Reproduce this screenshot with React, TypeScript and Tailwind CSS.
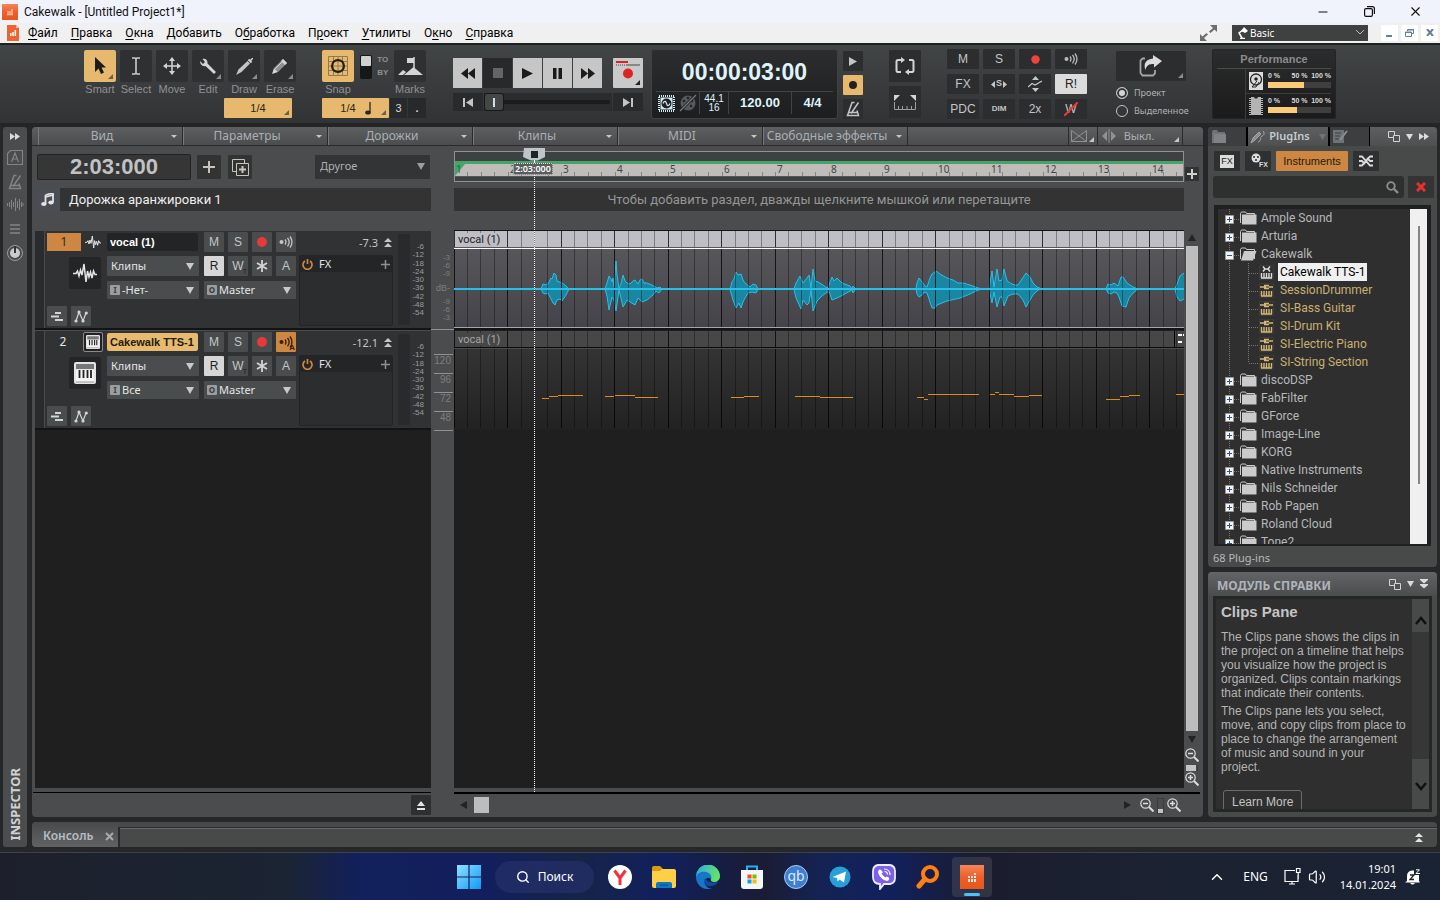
import React from "react";
import { Search, ChevronUp, Volume2, Minus, X, Copy } from "lucide-react";

const beats = Array.from({ length: 160 }, (_, i) => i);

function Corner({ color = "#8b8d8e" }: { color?: string }) {
  return (
    <svg className="absolute bottom-[3px] right-[3px]" width="5" height="5" aria-hidden="true">
      <path d="M5 0V5H0z" fill={color} />
    </svg>
  );
}

function Down({ className = "" }: { className?: string }) {
  return (
    <svg className={className} width="8" height="7" aria-hidden="true">
      <path d="M0 0H8L4 7z" fill="currentColor" />
    </svg>
  );
}

function Btn({ label, className = "", children }: { label: string; className?: string; children?: React.ReactNode }) {
  return (
    <button type="button" aria-label={label} className={"relative flex shrink-0 items-center justify-center " + className}>
      {children}
    </button>
  );
}

function Logo({ size }: { size: number }) {
  return (
    <svg width={size} height={size} viewBox="0 0 24 24" aria-hidden="true">
      <defs>
        <linearGradient id="cw" x1="0" y1="0" x2="0" y2="1">
          <stop offset="0" stopColor="#f5855c" />
          <stop offset="0.5" stopColor="#ee5f27" />
          <stop offset="1" stopColor="#e5581d" />
        </linearGradient>
      </defs>
      <path d="M0 0H24V24H0z" fill="url(#cw)" />
      <g fill="#fde6dc">
        <path d="M8 11h2v2H8zM8 14h2v3H8zM11 11h2v2h-2zM11 14h2v3h-2zM14 8h2v2h-2zM14 11h2v2h-2zM14 14h2v3h-2z" />
      </g>
    </svg>
  );
}

/* ---------- window chrome ---------- */

function TitleBar() {
  return (
    <header className="flex h-[23px] shrink-0 items-center bg-[#f0f3fb] pl-[2px] pr-[2px] text-[#111]">
      <Logo size={16} />
      <h1 className="ml-[6px] flex-1 font-['Roboto',sans-serif] text-[12px] leading-4">Cakewalk - [Untitled Project1*]</h1>
      <Btn label="Minimize" className="w-[46px]"><Minus size={14} strokeWidth={1.8} /></Btn>
      <Btn label="Restore" className="w-[46px]"><svg width="11" height="11" fill="none"><path d="M.6 4q0-1.400 1.400-1.400h5Q8.400 2.600 8.400 4v5q0 1.400-1.400 1.400H2Q.6 10.400.6 9zM3 .6h5.400q2 0 2 2V8" stroke="#111" strokeWidth="1.200" /></svg></Btn>
      <Btn label="Close" className="w-[46px]"><X size={15} strokeWidth={1.8} /></Btn>
    </header>
  );
}

const menus: [string, string, string][] = [
  ["", "Ф", "айл"], ["", "П", "равка"], ["", "О", "кна"], ["", "Д", "обавить"], ["О", "б", "работка"],
  ["П", "р", "оект"], ["", "У", "тилиты"], ["О", "к", "но"], ["", "С", "правка"],
];

function MenuBar() {
  return (
    <nav className="flex h-5 shrink-0 items-center bg-[#f0f0f0] pb-px pl-[7px] pr-[2px] text-[12px] text-black font-['Roboto',sans-serif]">
      <svg width="12" height="16" viewBox="0 0 12 16" aria-hidden="true">
        <path d="M0 0H9L12 3V16H0z" fill="#ec6430" />
        <path d="M9 0V3H12z" fill="#f9b79b" />
        <path d="M3 8h1.5v3H3zM5.300 7h1.500v4H5.300zM7.600 5h1.500v6H7.600z" fill="#fff" />
      </svg>
      <div className="ml-[9px] flex flex-1 gap-[13px] leading-4">
        {menus.map(([a, b, c]) => (
          <a key={a + b + c} href="#menu" className="whitespace-nowrap">{a}<span className="underline underline-offset-2">{b}</span>{c}</a>
        ))}
      </div>
      <svg width="17" height="16" viewBox="0 0 17 16" className="mr-[15px]" aria-hidden="true">
        <path d="M10 0h7v7l-2.500-2.500-4 3.500-1.500-1.500 4-3.500zM7 16H0V9l2.500 2.500 4-3.500L8 9.500 4 13z" fill="#6d6d6d" />
      </svg>
      <div className="relative flex h-4 w-[136px] items-center bg-[#3f4040] text-white">
        <svg width="11" height="12" viewBox="0 0 11 12" className="absolute left-[5px]" aria-hidden="true">
          <path d="M3 11.500h5M5 11 2 6 6 3" stroke="#fff" strokeWidth="1.500" fill="none" />
          <path d="M4 4 7 0l4 4-3 2z" fill="#fff" />
        </svg>
        <select aria-label="Workspace" className="h-4 w-full appearance-none bg-transparent pl-[18px] font-['Noto_Sans',sans-serif] text-[10px] leading-4 outline-none">
          <option>Basic</option>
        </select>
        <svg width="8" height="5" className="absolute right-[4px]" aria-hidden="true"><path d="M0 0l4 4 4-4" stroke="#bbb" fill="none" /></svg>
      </div>
      <div className="ml-[13px] flex gap-[3px] text-[#6a7f96]">
        <Btn label="Minimize project" className="h-4 w-[17px] bg-white"><svg width="7" height="9"><path d="M0 7h6v2H0z" fill="currentColor" /></svg></Btn>
        <Btn label="Restore project" className="h-4 w-[17px] bg-white"><svg width="9" height="8"><path d="M2.500 2V.5h6v4H7M.5 3h6v4.500h-6zM0 3.500h7M2 1h7" stroke="currentColor" fill="none" /></svg></Btn>
        <Btn label="Close project" className="h-4 w-[17px] bg-white"><svg width="8" height="7"><path d="M1 0l6 7M7 0L1 7" stroke="currentColor" strokeWidth="2" /></svg></Btn>
      </div>
    </nav>
  );
}

/* ---------- control bar ---------- */

const toolIcons: { name: string; icon: React.ReactNode; corner: boolean }[] = [
  { name: "Smart", corner: true, icon: <svg width="12" height="18"><path d="M1 0v15l3.500-3.500L7 17l3-1.500L7.500 10.500H12z" fill="#1b1b1b" /></svg> },
  { name: "Select", corner: false, icon: <svg width="8" height="18"><path d="M0 1h3l1 1 1-1h3M4 2v14M0 17h3l1-1 1 1h3" stroke="#c9cbcc" strokeWidth="1.600" fill="none" /></svg> },
  { name: "Move", corner: false, icon: <svg width="18" height="18"><path d="M9 2v14M2 9h14" stroke="#d4d5d6" strokeWidth="1.500" /><path d="M9 0l3 4H6zM9 18l3-4H6zM0 9l4-3v6zM18 9l-4-3v6z" fill="#d4d5d6" /></svg> },
  { name: "Edit", corner: true, icon: <svg width="18" height="17"><path d="M1 3 4 6 6 4 3.500 1C6 0 9 2 8.500 5.500L17 14l-2 2L6.500 8C4 9 1 6.500 1 3z" fill="#d4d5d6" /></svg> },
  { name: "Draw", corner: true, icon: <svg width="17" height="17"><path d="M0 17 2.500 11.500 11.500 3 14 5.500 5.500 14z" fill="#c4c5c6" /><path d="M12.500 1.500 15.500 4.500" stroke="#d4d5d6" strokeWidth="2" /><path d="M14 3 17 0" stroke="#d4d5d6" strokeWidth="1.500" /></svg> },
  { name: "Erase", corner: true, icon: <svg width="17" height="17"><path d="M2 10 11 1l4 4-9 9z" fill="#8e9091" /><path d="M9 3l2-2 4 4-2 2zM0 16l2-6 4 4z" fill="#d4d5d6" /><path d="M3 11l7-7" stroke="#d4d5d6" /></svg> },
];

function Tools() {
  return (
    <section className="flex flex-col" aria-label="Tools">
      <div className="flex gap-1">
        {toolIcons.map((t, i) => (
          <div key={t.name} className="flex w-8 flex-col items-center">
            <Btn label={t.name} className={i === 0 ? "h-8 w-8 rounded-[2px] bg-[#e6b96e]" : "h-8 w-8 rounded-[2px] bg-[#2e3031]"}>
              {t.icon}
              {t.corner && <Corner color={i === 0 ? "#6f5f42" : "#8b8d8e"} />}
            </Btn>
            <span className="h-4 text-[11px] leading-[15px] text-[#8f9192]">{t.name}</span>
          </div>
        ))}
      </div>
      <Btn label="Draw resolution" className="mr-1 h-5 w-[68px] self-end rounded-[1px] bg-[#e6b96e] text-[11px] text-[#2b2618]">1/4<Corner color="#6f5f42" /></Btn>
    </section>
  );
}

function Snap() {
  return (
    <section className="flex w-[104px] flex-col" aria-label="Snap">
      <div className="flex justify-between">
        <div className="flex w-8 flex-col items-center">
          <Btn label="Snap" className="h-8 w-8 rounded-[2px] bg-[#e6b96e]">
            <svg width="20" height="20" fill="none"><path d="M.5.5h19v19H.5zM5.500.5v19M10 .5v19M14.500.5v19M.5 5.500h19M.5 10h19M.5 14.500h19" stroke="#94794a" /><circle cx="10" cy="10" r="6" stroke="#221d12" strokeWidth="2" /></svg>
          </Btn>
          <span className="h-4 text-[11px] leading-[15px] text-[#8f9192]">Snap</span>
        </div>
        <button type="button" aria-label="Snap to or by" className="mt-[5px] flex h-6 w-3 flex-col self-start rounded-[2px] bg-[#161717] p-px"><span className="h-[10px] w-full rounded-[1px] bg-[#d0d0d0]" /></button>
        <div className="mt-[3px] text-[8px] font-bold leading-[13px] text-[#8f9192]"><div>TO</div><div>BY</div></div>
        <div className="flex w-8 flex-col items-center">
          <Btn label="Marks" className="h-8 w-8 rounded-[2px] bg-[#2e3031]">
            <svg width="25" height="20"><path d="M6 19 15.500 11 25 19zM0 19l5-5 3 2-3 3z" fill="#d4d5d6" /><path d="M16 12V1" stroke="#d4d5d6" strokeWidth="1.500" /><path d="M9 2h7v5H9z" fill="#d4d5d6" /></svg>
          </Btn>
          <span className="h-4 text-[11px] leading-[15px] text-[#8f9192]">Marks</span>
        </div>
      </div>
      <div className="flex gap-px text-[11px]">
        <Btn label="Snap resolution" className="h-5 w-[67px] gap-[9px] rounded-[1px] bg-[#e6b96e] text-[#2b2618]">
          <span>1/4</span>
          <svg width="6" height="13"><path d="M5 0v10" stroke="#2b2618" strokeWidth="1.300" /><ellipse cx="3" cy="10.500" rx="2.800" ry="2" fill="#2b2618" /></svg>
          <Corner color="#6f5f42" />
        </Btn>
        <Btn label="Triplet" className="h-5 w-[17px] bg-[#28292a] text-[#d8d8d8]">3</Btn>
        <Btn label="Dotted" className="h-5 flex-1 bg-[#28292a] font-bold text-[#d8d8d8]">.</Btn>
      </div>
    </section>
  );
}

function Transport() {
  const b = "h-[30px] w-[29px] bg-[#c6c6c6] text-[#1b1b1b]";
  return (
    <section className="mt-2 flex flex-col gap-[5px]" aria-label="Transport">
      <div className="flex gap-px">
        <Btn label="Rewind" className={b}><svg width="14" height="11"><path d="M7 0v11L0 5.500zM14 0v11L7 5.500z" fill="currentColor" /></svg></Btn>
        <Btn label="Stop" className="h-[30px] w-[29px] bg-[#28292b]"><svg width="10" height="10"><path d="M0 0h10v10H0z" fill="#636566" /></svg></Btn>
        <Btn label="Play" className={b}><svg width="11" height="11"><path d="M0 0l11 5.500L0 11z" fill="currentColor" /></svg></Btn>
        <Btn label="Pause" className={b}><svg width="9" height="11"><path d="M0 0h3.500v11H0zM5.500 0H9v11H5.500z" fill="currentColor" /></svg></Btn>
        <Btn label="Fast forward" className={b}><svg width="14" height="11"><path d="M0 0l7 5.500L0 11zM7 0l7 5.500L7 11z" fill="currentColor" /></svg></Btn>
        <Btn label="Record" className="ml-[10px] h-[30px] w-[30px] rounded-[1px] bg-[#c9c9c9]">
          <svg width="30" height="30"><path d="M3 4h12" stroke="#d22" strokeWidth="2" /><path d="M3 7h12" stroke="#888" strokeWidth="2" strokeDasharray="1 1" /><path d="M14 7h13" stroke="#888" strokeWidth="2" /><circle cx="15" cy="15.500" r="5" fill="#dd2424" /><path d="M27 22v5h-5z" fill="#222" /></svg>
        </Btn>
      </div>
      <div className="flex gap-px">
        <Btn label="Go to start" className="h-[18px] w-[30px] bg-[#292a2c]"><svg width="10" height="9"><path d="M0 0h2v9H0zM10 0v9L3 4.500z" fill="#c4c4c4" /></svg></Btn>
        <div className="relative flex h-[18px] flex-1 items-center bg-[#2b2c2e] px-[2px]">
          <div className="h-1 w-full rounded bg-[#1a1b1c]" />
          <div className="absolute left-px flex h-[16px] w-[18px] items-center justify-center rounded-[2px] bg-[#454747] ring-1 ring-[#171717]"><span className="h-[9px] w-[2px] bg-[#cfe0e8]" /></div>
        </div>
        <Btn label="Go to end" className="h-[18px] w-[30px] bg-[#292a2c]"><svg width="10" height="9"><path d="M8 0h2v9H8zM0 0v9l7-4.500z" fill="#c4c4c4" /></svg></Btn>
      </div>
    </section>
  );
}

function Display() {
  return (
    <section className="flex w-[185px] flex-col rounded-[2px] bg-gradient-to-b from-[#2c2d2f] to-[#1d1e1f] px-1 text-[#dff4fa] ring-1 ring-[#3f4142]" aria-label="Time">
      <output className="flex h-[42px] items-center justify-center border-b border-[#414344] pt-[3px] text-[23px] font-bold">00:00:03:00</output>
      <div className="flex h-[22px] items-stretch">
        <div className="flex w-[43px] items-center gap-1 pl-[2px]">
          <svg width="17" height="17" fill="none"><path d="M1 1h15v15H1z" stroke="#cfe8f2" strokeWidth="2" strokeDasharray="1 1" /><path d="M2.500 2.500h12v12h-12z" fill="#cfe8f2" /><circle cx="8.500" cy="8.500" r="5" fill="#1f2022" /><path d="M5 8.500c1.500-3.500 3-2 3.500 0s2 3.500 3.500 0" stroke="#cfe8f2" strokeWidth="1.200" /></svg>
          <svg width="18" height="18"><circle cx="9" cy="9" r="7.500" fill="#55595c" /><g fill="#1f2022"><circle cx="5" cy="7" r="1.200" /><circle cx="9" cy="4" r="1.200" /><circle cx="13" cy="7" r="1.200" /><circle cx="12" cy="12" r="1.200" /></g><path d="M0 18 18 0" stroke="#1f2022" strokeWidth="3" /><path d="M1 17 17 1" stroke="#77797b" strokeWidth="1.200" /></svg>
        </div>
        <div className="flex w-[29px] flex-col items-center justify-center border-l border-[#414344] text-[10px] leading-[9px]"><span>44.1</span><span>16</span></div>
        <div className="flex flex-1 items-center justify-center border-l border-[#414344] text-[13px] font-bold">120.00</div>
        <div className="flex w-[42px] items-center justify-center border-l border-[#414344] text-[13px] font-bold">4/4</div>
      </div>
    </section>
  );
}

function Echo({ color = "#b9bbbc" }: { color?: string }) {
  return <svg width="14" height="12" fill="none"><circle cx="2.500" cy="6" r="2" fill={color} /><path d="M6 3.500c1.200 1.500 1.200 3.500 0 5M8.500 1.800c2 2.500 2 6 0 8.500M11 .5c2.500 3.500 2.500 7.500 0 11" stroke={color} strokeWidth="1.300" /></svg>;
}

function Metronome({ color = "#c4c4c4" }: { color?: string }) {
  return <svg width="14" height="16" fill="none"><path d="M8.500 1.500H6L1.500 14.500h11L11 9.500M5 12.500 12.500 1.500M3 11.500h9" stroke={color} strokeWidth="1.500" /></svg>;
}

function ControlBar() {
  const mix = "h-5 w-8 rounded-[1px] bg-[#2b2d2e]";
  return (
    <div className="flex h-[84px] shrink-0 overflow-hidden border-b-4 border-t-2 border-[#242526] bg-gradient-to-b from-[#424545] to-[#313335] pl-[84px] pt-[5px] [border-top-color:#1c2321] font-['Liberation_Sans',Arial,sans-serif]">
      <Tools />
      <div className="ml-[26px] flex"><Snap /></div>
      <div className="ml-[27px] flex w-[190px]"><Transport /></div>
      <div className="ml-[9px] flex h-[68px]"><Display /></div>
      <div className="ml-[6px] mt-px flex flex-col gap-[4px]">
        <Btn label="Playhead follow" className="h-5 w-5 rounded-[1px] bg-[#2b2d2e]"><svg width="8" height="9"><path d="M0 0l8 4.500L0 9z" fill="#c4c4c4" /></svg></Btn>
        <Btn label="Record metronome" className="h-5 w-5 rounded-[1px] bg-[#e6b96e]"><svg width="8" height="8"><circle cx="4" cy="4" r="4" fill="#222" /></svg></Btn>
        <Btn label="Metronome" className="h-5 w-5 rounded-[1px] bg-[#2b2d2e]"><Metronome /></Btn>
      </div>
      <div className="ml-[26px] flex flex-col gap-1">
        <Btn label="Loop" className="h-8 w-8 rounded-[1px] bg-[#2b2d2e]"><svg width="20" height="18" fill="none"><path d="M8 3H3q-1.500 0-1.500 1.500v9Q1.500 15 3 15h3M12 15h5q1.500 0 1.500-1.500v-9Q18.500 3 17 3h-3" stroke="#d4d5d6" strokeWidth="2" /><path d="M6 0l4 3-4 3zM14 12l-4 3 4 3z" fill="#d4d5d6" /></svg></Btn>
        <Btn label="Punch" className="h-8 w-8 rounded-[1px] bg-[#2b2d2e]"><svg width="22" height="15" fill="none"><path d="M0 0h6L0 6zM22 0h-6l6 6z" fill="#d4d5d6" /><path d="M.5 7v7.500h21V7M4.500 11v3M8.500 11v3M13 11v3M17.500 11v3" stroke="#9b9d9e" /></svg></Btn>
      </div>
      <div className="-mt-px ml-[26px] grid h-[70px] grid-cols-[repeat(4,32px)] gap-x-1 gap-y-[5px] text-[12px] text-[#c4c6c7]">
        <Btn label="Mute" className={mix}>M</Btn>
        <Btn label="Solo" className={mix}>S</Btn>
        <Btn label="Arm" className={mix}><svg width="9" height="9"><circle cx="4.500" cy="4.500" r="4.200" fill="#f2423f" /></svg></Btn>
        <Btn label="Input echo" className={mix}><Echo /></Btn>
        <Btn label="FX bypass" className={mix}>FX</Btn>
        <Btn label="Exclusive solo" className={mix + " gap-px text-[9px] font-bold"}><svg width="4" height="7"><path d="M4 0v7L0 3.500z" fill="currentColor" /></svg>S<svg width="4" height="7"><path d="M0 0v7l4-3.500z" fill="currentColor" /></svg></Btn>
        <Btn label="Offset" className={mix}><svg width="15" height="16" fill="none"><path d="M7.500 0l3.500 4H4zM7.500 16l3.500-4H4z" fill="#c4c6c7" /><path d="M0 11 4 7.500l3 1.500 7-4" stroke="#c4c6c7" strokeWidth="1.300" /></svg></Btn>
        <Btn label="Read automation" className="h-5 w-8 rounded-[1px] bg-[#dcdcdc] text-[#222]">R!</Btn>
        <Btn label="Delay compensation" className={mix}>PDC</Btn>
        <Btn label="Dim" className={mix + " text-[8px] font-bold"}>DIM</Btn>
        <Btn label="Upsample" className={mix}>2x</Btn>
        <Btn label="Write automation" className={mix}>W<svg className="absolute" width="14" height="14"><path d="M0 14 14 0" stroke="#e83a36" strokeWidth="2" /></svg></Btn>
      </div>
      <div className="ml-[29px] flex w-[70px] flex-col">
        <Btn label="Export" className="mt-px h-[30px] w-[70px] rounded-[1px] bg-[#2b2d2e]"><svg width="24" height="22" fill="none"><path d="M6 3.500H3.500l-2 2V18l2 2.500H14l2-2V15" stroke="#a4a6a7" strokeWidth="1.800" /><path d="M14 0l9 6-8 6.500V9C10 9 7.500 10 6.500 15 4 9 7 4 14 3.500z" fill="#dcdcdc" /></svg><Corner /></Btn>
        <fieldset className="mt-[3px] flex flex-col font-['Noto_Sans',sans-serif] text-[9px] text-[#b0b2b3]">
          {["Проект", "Выделенное"].map((t, i) => (
            <label key={t} className="flex h-[18px] items-center gap-[6px] whitespace-nowrap">
              <input type="radio" name="export" defaultChecked={i === 0} className="h-3 w-3 shrink-0 appearance-none rounded-full border border-[#c4c4c4] checked:bg-[#d4d4d4] checked:shadow-[inset_0_0_0_2px_#35383a]" />
              {t}
            </label>
          ))}
        </fieldset>
      </div>
      <section className="ml-[27px] h-[68px] w-[122px] shrink-0 rounded-[1px] bg-gradient-to-b from-[#2b2c2d] to-[#1b1b1b] px-1 ring-1 ring-[#232425]" aria-label="Performance">
        <h2 className="border-b border-[#4a4a4a] text-center text-[11px] font-bold leading-[18px] text-[#8b8b8b]">Performance</h2>
        {[36, 29].map((w, i) => (
          <div key={w} className={i === 0 ? "ml-[28px] flex h-[25px] gap-[5px] border-b border-l border-[#3d3d3d] pl-[3px] pt-[3px]" : "ml-[28px] flex h-[25px] gap-[5px] border-l border-[#3d3d3d] pl-[3px] pt-[3px]"}>
            {i === 0 ? (
              <svg width="14" height="18"><path d="M0 0h14v18H0z" fill="#dcdcdc" /><circle cx="7" cy="7.500" r="5.500" fill="none" stroke="#222" strokeWidth="1.300" /><circle cx="7" cy="7" r="1.800" fill="#222" /><path d="M8 9l-5 6h4l3-5" stroke="#222" fill="none" /></svg>
            ) : (
              <svg width="14" height="18"><path d="M2 0h3l1 1.500h2L9 0h3v18H2z" fill="#b4b4b4" /><path d="M1 1v17M13 1v17" stroke="#b4b4b4" strokeWidth="2" strokeDasharray="1 1" /></svg>
            )}
            <div className="flex flex-1 flex-col">
              <div className="flex justify-between text-[7px] font-bold leading-[8px] text-[#dcdcdc]"><span>0 %</span><span className="pl-2">50 %</span><span>100 %</span></div>
              <div className="mt-[2px] h-[6px] bg-[#3f3f3f]"><div className="h-full bg-[#fbcb7a]" style={{ width: w }} /></div>
            </div>
          </div>
        ))}
      </section>
    </div>
  );
}

/* ---------- inspector ---------- */

function Inspector() {
  return (
    <aside className="flex w-6 shrink-0 flex-col items-center rounded-[3px] bg-[#4b4c4d] py-[6px] text-[#828486]">
      <Btn label="Expand inspector"><svg width="10" height="7"><path d="M0 0l5 3.500L0 7zM5 0l5 3.500L5 7z" fill="#dcdcdc" /></svg></Btn>
      <svg className="mt-[10px]" width="16" height="15" fill="none"><path d="M3.500.5h12v14H.5v-11zM4.500 12 8 3l3.500 9M5.500 9h5" stroke="currentColor" strokeWidth="1.200" /></svg>
      <div className="mt-[9px]"><Metronome color="#828486" /></div>
      <svg className="mt-2" width="18" height="13"><path d="M1.500 5v3M3.500 4v5M5.500 2v9M7.500 4v5M9.500 0v13M11.500 3v7M13.500 1v11M15.500 4v5M17 5v3" stroke="currentColor" /></svg>
      <svg className="mt-[13px]" width="10" height="10"><path d="M0 1h10M0 5h10M0 9h10" stroke="currentColor" strokeWidth="1.500" /></svg>
      <svg className="mt-[10px]" width="18" height="18" fill="none"><circle cx="9" cy="9" r="7.500" stroke="#9a9c9e" /><circle cx="9" cy="9" r="5" fill="#c9cbcd" /><path d="M9 2v7" stroke="#333" strokeWidth="2" /></svg>
      <div className="flex-1" />
      <span className="rotate-180 font-['Noto_Sans',sans-serif] text-[13px] font-bold leading-4 text-[#d0d2d4] [writing-mode:vertical-rl]">INSPECTOR</span>
    </aside>
  );
}

/* ---------- track view ---------- */

const trackMenus = ["Вид", "Параметры", "Дорожки", "Клипы", "MIDI", "Свободные эффекты"];

function TrackMenu() {
  return (
    <nav className="flex h-[19px] shrink-0 overflow-hidden rounded-t-[3px] border-b border-[#2a2b2c] bg-gradient-to-b from-[#5d5f60] to-[#4b4c4d] pl-[6px] font-['Noto_Sans',sans-serif] text-[12px] text-[#aab0b5]">
      {trackMenus.map((m) => (
        <Btn key={m} label={m} className="w-[145px] border-l border-[#77797a] pr-[18px] shadow-[inset_-1px_0_0_#2a2b2c]">
          <span className="whitespace-nowrap leading-[18px]">{m}</span>
          <svg className="absolute right-[6px] top-[8px]" width="6" height="3"><path d="M0 0h6L3 3z" fill="#c4c6c8" /></svg>
        </Btn>
      ))}
      <div className="min-w-0 flex-1" />
      <Btn label="Crossfade" className="w-[29px] border-l border-[#2a2b2c] pr-2"><svg width="16" height="12" fill="none"><path d="M.5.5v11h15V.5L.5 11.500M.5.5l15 11" stroke="#8f9192" /></svg><Corner color="#c4c6c8" /></Btn>
      <Btn label="Nudge" className="mr-5 w-[86px] gap-2 border-l border-r border-[#2a2b2c] pr-6"><svg width="14" height="14"><path d="M5 2v10L0 7zM9 2v10l5-5z" fill="#8f9192" /><path d="M7 0v14" stroke="#8f9192" /></svg><span className="text-[11px] leading-[18px]">Выкл.</span><Corner color="#c4c6c8" /></Btn>
    </nav>
  );
}

function Field({ label, value, tag, tall }: { label: string; value: string; tag?: string; tall?: boolean }) {
  return (
    <div className={tall ? "relative h-5 w-[92px] rounded-[1px] bg-[#4a4d4e]" : "relative h-[18px] w-[92px] rounded-[1px] bg-[#4a4d4e]"}>
      {tag && <span className="pointer-events-none absolute left-[3px] top-1 flex h-[10px] w-[10px] items-center justify-center rounded-[1px] bg-[#9b9d9e] text-[8px] font-bold leading-[10px] text-[#3a3c3d]">{tag}</span>}
      <select aria-label={label} className={tag ? "h-full w-full appearance-none bg-transparent pl-[15px] leading-4 outline-none" : "h-full w-full appearance-none bg-transparent pl-1 leading-4 outline-none"}>
        <option>{value}</option>
      </select>
      <Down className={tall ? "pointer-events-none absolute right-[5px] top-[7px] text-[#c9c9c9]" : "pointer-events-none absolute right-[5px] top-[6px] text-[#c9c9c9]"} />
    </div>
  );
}

function WaveIcon({ w, h }: { w: number; h: number }) {
  return <svg width={w} height={h} viewBox="0 0 24 20" fill="none"><path d="M0 10.500h3L4.500 8 6 13l1.500-6L9 12 11 1l2 18 1.500-11 1.500 6 1.500-5 1.500 6 1.500-7 1.500 3.500H24" stroke="#e4e4e4" strokeWidth="1.500" /></svg>;
}

function KeysIcon({ s }: { s: number }) {
  return <svg width={s} height={s} viewBox="0 0 22 22"><rect width="22" height="22" rx="2" fill="#e4e4e4" /><path d="M2 2h18v5H2z" fill="#777" /><path d="M2 8h18v12H2z" fill="#f4f4f4" /><path d="M5.500 8v8M9.500 8v8M13.500 8v8M17 8v8" stroke="#222" strokeWidth="1.800" /><path d="M2 20h18" stroke="#999" /></svg>;
}

const meterScale = [-6, -12, -18, -24, -30, -36, -42, -48, -54];

function Track({ n, name, gain, input, selected }: { n: number; name: string; gain: string; input: string; selected: boolean }) {
  const b = "h-5 w-5 rounded-[1px] bg-[#4a4d4e]";
  return (
    <article className="flex h-[100px] shrink-0 border-b-2 border-t border-b-[#141414] border-t-[#4a4b4c] bg-[#303233] font-['Noto_Sans',sans-serif] text-[11px] text-[#e4e4e4]">
      <div className="w-[10px] border-r border-[#4a4b4c] bg-[#2a2b2c]" />
      <div className="ml-[2px] flex w-[60px] flex-col pt-px">
        <div className="flex h-5 items-center">
          <span className={n === 1 ? "flex h-[18px] w-[34px] items-center justify-center bg-[#cd8743] text-[12px] text-[#3a2a14]" : "flex h-[18px] w-8 items-center justify-center text-[12px]"}>{n}</span>
          {n === 1 ? <span className="ml-1"><WaveIcon w={16} h={14} /></span> : <span className="ml-1 flex h-5 w-5 items-center justify-center rounded-[2px] border border-[#8b8b8b] bg-[#222]"><KeysIcon s={14} /></span>}
        </div>
        <div className="ml-[22px] mt-[5px] flex h-8 w-8 items-center justify-center rounded-[2px] bg-[#242526]">{n === 1 ? <WaveIcon w={24} h={20} /> : <KeysIcon s={22} />}</div>
        <div className="mt-[17px] flex gap-1">
          <Btn label="Take lanes" className={b}><svg width="13" height="9"><path d="M4 1h6M0 4.500h8M4 8h8" stroke="#d4d4d4" strokeWidth="2" /></svg></Btn>
          <Btn label="Automation lanes" className={b}><svg width="14" height="13" fill="none"><path d="M2 11 5 2l4 9 3-8" stroke="#d4d4d4" strokeWidth="1.200" /><g fill="#d4d4d4"><circle cx="2" cy="11" r="1.600" /><circle cx="5" cy="2" r="1.600" /><circle cx="9" cy="11" r="1.600" /><circle cx="12.300" cy="3" r="1.600" /></g></svg></Btn>
        </div>
      </div>
      <div className="flex w-[92px] flex-col pt-px">
        <input aria-label={"Track " + n + " name"} defaultValue={name} className={selected ? "mt-px h-[18px] w-[91px] rounded-[2px] bg-[#e8ba70] px-[3px] font-['Liberation_Sans'] text-[11px] font-bold text-[#241c0c]" : "mt-px h-[18px] w-[91px] rounded-[2px] bg-[#232425] px-[3px] font-['Liberation_Sans'] text-[11px] font-bold text-white"} />
        <div className="mt-[5px]"><Field label="Track control view" value="Клипы" tall /></div>
        <div className="mt-[5px]"><Field label="Input" value={input} tag="I" /></div>
      </div>
      <div className="ml-[5px] flex w-[92px] flex-col pt-px font-['Liberation_Sans']">
        <div className="flex gap-1 text-[12px] text-[#c4c6c7]">
          <Btn label="Mute" className={b}>M</Btn>
          <Btn label="Solo" className={b}>S</Btn>
          <Btn label="Arm" className={b}><svg width="10" height="10"><circle cx="5" cy="5" r="5" fill="#e8393a" /></svg></Btn>
          <Btn label="Input echo" className={selected ? "h-5 w-5 rounded-[1px] bg-[#cd8743]" : b}>
            <Echo color={selected ? "#33210c" : "#c4c6c7"} />
            {selected && <span className="absolute bottom-0 right-px text-[8px] font-bold leading-[9px] text-[#33210c]">A</span>}
          </Btn>
        </div>
        <div className="mt-1 flex gap-1 text-[12px] text-[#c4c6c7]">
          <Btn label="Read" className="h-5 w-5 rounded-[1px] bg-[#d6d6d6] text-[#222]">R</Btn>
          <Btn label="Write" className={b}>W<span className="absolute bottom-0 right-px text-[7px] leading-[8px] text-[#222]">T</span></Btn>
          <Btn label="Freeze" className={b}><svg width="12" height="12"><path d="M6 0v12M1 3l10 6M11 3 1 9" stroke="#d4d4d4" strokeWidth="1.800" /></svg></Btn>
          <Btn label="Archive" className={b}>A</Btn>
        </div>
        <div className="mt-[5px] font-['Noto_Sans',sans-serif]"><Field label="Output" value="Master" tag="O" /></div>
      </div>
      <div className="ml-[3px] flex w-[94px] flex-col">
        <span className="flex h-6 items-center justify-end gap-[6px] pr-px text-[#c4c6c7]">{gain}
          <svg width="8" height="10"><path d="M4 0l4 4H0zM4 5l4 4H0z" fill="#c4c6c7" /></svg>
        </span>
        <div className="flex h-[71px] flex-col rounded-[2px] border border-[#232425] bg-[#2b2d2e]">
          <div className="flex h-4 items-center gap-[6px] bg-[#232526] px-[2px]">
            <svg width="11" height="11" fill="none"><path d="M3 2a4.500 4.500 0 1 0 5 0M5.500 0v5" stroke="#cd8743" strokeWidth="1.700" /></svg>
            <span className="flex-1 leading-4">FX</span>
            <Btn label="Add effect"><svg width="9" height="9"><path d="M4.500 0v9M0 4.500h9" stroke="#8f9192" strokeWidth="1.500" /></svg></Btn>
          </div>
        </div>
      </div>
      <div className="my-[3px] ml-[5px] w-3 rounded-[2px] bg-[#292a2b]" />
      <ul className="flex w-[14px] flex-col justify-between pb-[11px] pt-[12px] text-right text-[8px] leading-[8px] text-[#9b9d9f] font-['Liberation_Sans']">
        {meterScale.map((v) => <li key={v}>{v}</li>)}
      </ul>
    </article>
  );
}

function TrackList() {
  return (
    <div className="flex w-[399px] shrink-0 flex-col">
      <div className="flex h-[42px] shrink-0 items-center pl-[5px] pr-px">
        <output className="flex h-[26px] w-[154px] items-center justify-center rounded-[2px] border border-[#232323] bg-[#363636] text-[22px] font-bold leading-6 text-[#c0c2c3] font-['Liberation_Sans']">2:03:000</output>
        <Btn label="Add track" className="ml-[6px] h-6 w-6 rounded-[1px] bg-[#323434]"><svg width="12" height="12"><path d="M6 0v12M0 6h12" stroke="#c9c3bc" strokeWidth="2" /></svg></Btn>
        <Btn label="Duplicate track" className="ml-[7px] h-6 w-6 rounded-[1px] bg-[#323434]"><svg width="17" height="17" fill="none"><path d="M4 12.500H.5V.5h12V4M4.500 4.500h12v12h-12z" stroke="#c9c3bc" /><path d="M10.500 7v7M7 10.500h7" stroke="#c9c3bc" strokeWidth="2" /></svg></Btn>
        <div className="relative ml-auto h-6 w-[115px] bg-[#323435] text-[11px] text-[#aeb0b2] font-['Noto_Sans',sans-serif]">
          <select aria-label="Track filter" className="h-full w-full appearance-none bg-transparent pb-px pl-[5px] outline-none"><option>Другое</option></select>
          <Down className="pointer-events-none absolute right-[5px] top-[8px] text-[#9b9d9f]" />
        </div>
      </div>
      <div className="ml-[3px] flex h-[23px] shrink-0 items-center bg-[#333]">
        <span className="flex h-full w-[25px] items-center justify-center bg-[#4b4d54]"><svg width="13" height="13"><path d="M4.500 2 12 0v9M4.500 2v9M4.500 4 12 2" stroke="#e4e4e4" strokeWidth="1.800" fill="none" /><ellipse cx="2.800" cy="11" rx="2.700" ry="2" fill="#e4e4e4" /><ellipse cx="10" cy="9.500" rx="2.700" ry="2" fill="#e4e4e4" /></svg></span>
        <span className="ml-[9px] font-['Roboto',sans-serif] text-[13px] text-[#eee]">Дорожка аранжировки 1</span>
      </div>
      <div className="ml-[3px] mt-[19px] flex flex-1 flex-col overflow-hidden bg-[#1f1f1f]">
        <Track n={1} name="vocal (1)" gain="-7.3" input="-Нет-" selected={false} />
        <Track n={2} name="Cakewalk TTS-1" gain="-12.1" input="Все" selected />
      </div>
      <div className="ml-px mt-1 flex h-[25px] shrink-0 items-center justify-end border-t border-black">
        <Btn label="Show bus pane" className="h-5 w-5 rounded-[1px] bg-[#2e2f30]"><svg width="8" height="9"><path d="M4 0l4 5H0zM0 7h8v2H0z" fill="#e4e4e4" /></svg></Btn>
      </div>
    </div>
  );
}

function ScaleColumn() {
  return (
    <div className="flex w-[23px] shrink-0 flex-col text-right font-['Liberation_Sans'] text-[8px] text-[#7c7e80]">
      <div className="h-[84px] shrink-0" />
      <div className="flex h-[100px] shrink-0 flex-col items-end justify-center border-b border-[#8f9192] pt-4 pr-1 leading-[8px]">
        <span>-3</span><span>-6</span><span>-9</span><span className="text-[9px] leading-[20px]">dB-</span><span>-9</span><span>-6</span><span>-3</span>
      </div>
      <div className="h-6 shrink-0" />
      {[120, 96, 72, 48].map((v) => (
        <div key={v} className="ml-[3px] mr-px h-[19px] shrink-0 border-t border-[#8f9192] pr-[2px] text-[10px] leading-[12px]">{v}</div>
      ))}
      <div className="ml-[3px] mr-px border-t border-[#8f9192]" />
    </div>
  );
}

function Ruler() {
  return (
    <div className="h-[31px] shrink-0 overflow-hidden border border-[#8f9192] bg-[#3d4142]">
      <div className="h-[9px]" />
      <div className="h-[3px] bg-[#45a566]" />
      <svg className="block overflow-visible bg-[#c0bcba]" width="100%" height="12">
        <path d="M0 0h10L0 12z" fill="#45a566" />
        {beats.map((i) => (
          <path key={i} d={`M${Math.round(i * 13.375) - 0.5} 8v4`} stroke="#858585" />
        ))}
        {beats.slice(0, 14).map((i) => (
          <text key={i} x={Math.round(i * 53.5) + 1} y="9" fontSize="10" fill={i === 0 ? "#1f6b3a" : "#444"} fontFamily="'Noto Sans', sans-serif">{i + 1}</text>
        ))}
      </svg>
      <div className="h-[5px] border-t border-[#55585a]" />
    </div>
  );
}

const wave =
  "M87 59 89 54 92 55 94 54 97 48 98 49 100 43 102 45 103 51 108 53 112 56 115 59 112 65 108 71 106 69 103 70 101 75 99 73 97 69 94 63 91 64 89 63z" +
  "M151 59 153 53 155 46 157 49 158 52 159 48 160 57 162 31 163 45 165 58 167 54 169 45 171 51 173 53 176 54 179 51 181 50 184 54 186 50 188 49 190 53 193 53 198 55 203 58 206 57 208 59 205 63 202 61 199 65 193 70 188 72 184 68 181 75 176 72 173 70 169 77 167 68 165 60 162 81 160 70 158 67 155 80 153 66z" +
  "M276 59 278 52 280 49 282 42 284 45 287 44 289 50 291 53 296 57 299 54 302 55 304 59 302 63 298 62 294 63 291 68 289 72 287 78 285 73 282 78 279 70 277 63z" +
  "M340 59 342 53 346 46 349 53 353 48 355 45 357 58 359 39 361 51 364 52 369 55 373 58 375 55 378 47 380 51 383 48 388 53 396 56 398 59 399 56 402 59 399 63 398 60 389 65 383 68 378 70 375 61 369 65 363 71 359 81 357 60 355 73 353 75 349 70 347 79 342 68z" +
  "M462 59 463 53 465 48 468 52 471 56 473 57 476 48 478 44 482 41 486 44 493 48 499 50 504 53 509 53 516 55 524 58 530 59 524 60 516 64 506 68 493 71 483 75 481 78 478 78 475 69 473 63 470 62 468 65 465 67 463 64z" +
  "M535 59 538 41 540 57 543 39 545 51 548 50 550 39 553 51 558 54 561 55 564 55 568 49 572 43 576 47 579 53 583 57 588 59 584 60 579 65 576 70 572 77 569 70 564 64 559 64 554 66 550 76 548 67 546 67 543 77 540 62 538 73z" +
  "M652 59 654 54 657 55 660 53 664 56 667 47 669 47 673 53 676 55 679 57 684 59 679 63 675 68 672 77 668 76 665 67 663 63 660 62 657 64 654 63z" +
  "M721 59 723 54 726 46 730 43 760 59 730 69 726 71 723 67z";

const notes: [number, number, number][] = [
  [88, 7, 68], [95, 9, 66], [104, 25, 65], [151, 9, 66], [161, 20, 65], [181, 23, 67], [277, 13, 67], [290, 15, 66],
  [341, 25, 66], [366, 33, 67], [463, 7, 67], [470, 4, 69], [474, 51, 64], [536, 5, 64], [541, 4, 62], [545, 15, 64],
  [560, 15, 66], [575, 13, 65], [652, 14, 69], [666, 9, 66], [675, 11, 65], [722, 14, 64],
];

function Grid({ top }: { top: number }) {
  return (
    <g shapeRendering="crispEdges">
      {beats.map((i) => {
        const bar = i % 4 === 0;
        return <path key={i} d={`M${Math.round(i * 13.375 - 0.3) + 0.5} ${top}V98`} stroke="#000" strokeOpacity={bar ? 0.75 : 0.35} />;
      })}
    </g>
  );
}

function Lanes() {
  return (
    <div className="flex flex-1 flex-col overflow-hidden bg-[#1f1f1f] font-['Roboto',sans-serif] text-[11px]">
      <article className="relative h-[100px] shrink-0 border-b-2 border-t border-[#141414]">
        <svg className="block" width="100%" height="97">
          <defs>
            <linearGradient id="audio" x1="0" y1="0" x2="0" y2="1"><stop offset="0" stopColor="#57575b" /><stop offset="1" stopColor="#444349" /></linearGradient>
          </defs>
          <rect width="100%" height="17" fill="#bfbec4" />
          <rect y="17" width="100%" height="80" fill="url(#audio)" />
          <path d={wave} transform="translate(0 -1)" fill="#1a86a1" stroke="#27c0ea" strokeWidth="1" />
          <Grid top={0} />
          <path d="M0 58H2400" stroke="#27c0ea" strokeWidth="2" shapeRendering="crispEdges" />
          <rect y="16" width="100%" height="1" fill="#55555a" />
          <rect y="17" width="100%" height="1" fill="#fff" />
          <rect y="96" width="100%" height="1" fill="#a5a5ab" />
        </svg>
        <span className="absolute left-1 top-[2px] bg-[#bfbec4] leading-[14px] text-[#222]">vocal (1)</span>
      </article>
      <article className="relative h-[100px] shrink-0">
        <svg className="block" width="100%" height="100">
          <defs>
            <linearGradient id="midi" x1="0" y1="0" x2="0" y2="1"><stop offset="0" stopColor="#343434" /><stop offset="1" stopColor="#222" /></linearGradient>
          </defs>
          <rect y="1" width="100%" height="17" fill="#464746" />
          <rect y="18" width="100%" height="81" fill="url(#midi)" />
          <Grid top={1} />
          <rect y="17" width="100%" height="1" fill="#0c0c0c" />
          <rect y="18" width="100%" height="1" fill="#4a4b4a" />
          {notes.map(([x, w, y]) => <rect key={x} x={x} y={y} width={w} height="1" fill="#dd8a1d" />)}
        </svg>
        <span className="absolute left-1 top-[3px] bg-[#464746] leading-[13px] text-[#a5a5a5]">vocal (1)</span>
        <svg className="absolute right-0 top-px" width="10" height="16"><path d="M.5 0v16" stroke="#000" /><path d="M4 4h4M9 4h1M4 11h4" stroke="#fff" strokeWidth="2" /></svg>
      </article>
    </div>
  );
}

function Magnifier({ plus }: { plus?: boolean }) {
  return <svg width="14" height="14" fill="none"><circle cx="5.500" cy="5.500" r="4.700" stroke="#dcdcdc" strokeWidth="1.200" /><path d="M9 9l4.500 4.500" stroke="#dcdcdc" strokeWidth="2" /><path d={plus ? "M3 5.500h5M5.500 3v5" : "M3 5.500h5"} stroke="#dcdcdc" strokeWidth="1.500" /></svg>;
}

function ClipsPane() {
  return (
    <div className="relative flex min-w-0 flex-1 flex-col pt-[5px]">
      <Ruler />
      <div className="mt-[6px] flex h-[23px] shrink-0 items-center justify-center bg-[#333] font-['Roboto',sans-serif] text-[13px] text-[#949697]">Чтобы добавить раздел, дважды щелкните мышкой или перетащите</div>
      <div className="mt-[19px] flex flex-1 flex-col overflow-hidden"><Lanes /></div>
      <div className="mt-1 flex h-[25px] shrink-0 items-center border-t-2 border-black pb-[2px] pl-[6px] pr-[3px]">
        <svg width="7" height="8"><path d="M7 0v8L0 4z" fill="#232323" /></svg>
        <div className="ml-[7px] h-4 w-[15px] bg-[#bdbdbd]" />
        <div className="flex-1" />
        <svg width="7" height="8" className="mr-[9px]"><path d="M0 0v8l7-4z" fill="#232323" /></svg>
        <Btn label="Zoom out horizontally"><Magnifier /></Btn>
        <span className="mx-[3px] mt-[2px] flex h-4 w-[7px] items-end border border-[#3b3b3b]"><span className="h-1 w-full bg-[#c4c4c4]" /></span>
        <Btn label="Zoom in horizontally"><Magnifier plus /></Btn>
      </div>
      <div className="absolute bottom-[25px] left-[80px] top-[28px] border-l border-dotted border-white" />
      <span className="absolute left-[59px] top-[17px] rounded-[2px] border border-dotted border-[#ddd] bg-[#5a5c5d] px-px font-['Noto_Sans',sans-serif] text-[9px] font-semibold leading-[10px] text-white">2:03:000</span>
      <svg className="absolute left-[69px] top-[2px]" width="23" height="15"><path d="M1 0h21v9l-7 3.500h-7L0 9z" fill="#bfc4c9" /><path d="M8 3h7v7H8z" fill="#222" /><path d="M11.500 12v3" stroke="#fff" /></svg>
    </div>
  );
}

function TrackView() {
  return (
    <main className="flex min-w-0 flex-1 flex-col overflow-hidden rounded-[4px] bg-[#4b4c4d]">
      <TrackMenu />
      <div className="flex min-h-0 flex-1">
        <TrackList />
        <ScaleColumn />
        <ClipsPane />
        <div className="flex w-[19px] shrink-0 flex-col items-center pr-[3px]">
          <Btn label="Add ruler" className="mt-[21px] h-[14px] w-[14px] bg-[#303333]"><svg width="10" height="10"><path d="M5 0v10M0 5h10" stroke="#d4cfc8" strokeWidth="2" /></svg></Btn>
          <svg className="mt-[53px]" width="8" height="7"><path d="M4 0l4 7H0z" fill="#232323" /></svg>
          <div className="mt-[5px] w-3 flex-1 bg-[#bdbdbd]" />
          <svg className="mb-[5px] mt-[5px]" width="8" height="7"><path d="M0 0h8L4 7z" fill="#232323" /></svg>
          <Btn label="Zoom out vertically"><Magnifier /></Btn>
          <span className="mb-px mt-[3px] flex h-[6px] w-3 border-r border-[#3b3b3b] pr-px"><span className="w-full bg-[#c4c4c4]" /></span>
          <Btn label="Zoom in vertically"><Magnifier plus /></Btn>
          <div className="mt-[6px] h-[25px] w-full"><div className="h-[2px] bg-black" /></div>
        </div>
      </div>
    </main>
  );
}

/* ---------- browser and help ---------- */

const kids = ["Cakewalk TTS-1", "SessionDrummer", "SI-Bass Guitar", "SI-Drum Kit", "SI-Electric Piano", "SI-String Section"];
const folders = ["Ample Sound", "Arturia", "Cakewalk", "discoDSP", "FabFilter", "GForce", "Image-Line", "KORG", "Native Instruments", "Nils Schneider", "Rob Papen", "Roland Cloud", "Tone2"];

function PluginIcon({ color, first }: { color: string; first: boolean }) {
  return (
    <svg width="15" height="15" viewBox="0 0 15 15" fill="none">
      <path d="M.5.5h14v14H.5z" stroke="#3c3b35" />
      {first ? <path d="M4 1.500 6 4h3l2-2.500M4 6.500 6 4M11 6.500 9 4" stroke={color} strokeWidth="1.500" /> : <path d="M1 4h13M5 2.500h5M5 5.500h5" stroke={color} strokeWidth="1.600" />}
      {!first && <path d="M7 3.500h3v1H7z" fill="#2f2f2f" />}
      <path d="M2.500 8v5M5 8v5M7.500 8v5M10 8v5M12.500 8v5" stroke={color} strokeWidth="1.400" />
      <path d="M2 13h11" stroke={color} strokeWidth="1.500" />
    </svg>
  );
}

function Tree() {
  return (
    <ul className="min-w-0 flex-1 overflow-hidden text-[12px] text-[#b6b8ba] font-['Roboto',sans-serif]">
      {folders.map((f) => (
        <li key={f}>
          <div className="flex h-[18px] items-center pl-[7px]">
            <svg width="15" height="18" aria-hidden="true">
              <path d="M4.500 0V18M9 10.500H15" stroke="#777" strokeDasharray="1 1" />
              <path d="M.5 6.500h8v8h-8z" fill="#f4f4f4" stroke="#9a9a9a" />
              <path d={f === "Cakewalk" ? "M2 10.500h5" : "M2 10.500h5M4.500 8v5"} stroke="#2f4f9f" />
            </svg>
            <svg width="17" height="14" aria-hidden="true">
              <path d="M.5 12V2.500l1-1.500h4l1 1.500h8V12" fill="none" stroke="#cbcbcb" />
              {f === "Cakewalk" ? <path d="M4 4h12.500L13 13.500H1z" fill="#cbcbcb" /> : <path d="M2 3.500h14.500v10H2z" fill="#cbcbcb" />}
            </svg>
            <span className="ml-1 whitespace-nowrap leading-4">{f}</span>
          </div>
          {f === "Cakewalk" && (
            <ul>
              {kids.map((k, i) => (
                <li key={k} className="flex h-[18px] items-center pl-[7px] text-[#c9b06f]">
                  <svg width="34" height="18" aria-hidden="true">
                    <path d={i === kids.length - 1 ? "M4.500 0V18M23.500 0V10M24 10.500H34" : "M4.500 0V18M23.500 0V18M24 10.500H34"} stroke="#777" fill="none" strokeDasharray="1 1" />
                  </svg>
                  <PluginIcon color={i === 0 ? "#dcdcdc" : "#d3b878"} first={i === 0} />
                  <span className={i === 0 ? "ml-1 whitespace-nowrap bg-[#f0f0f0] px-[2px] leading-[18px] text-black" : "ml-[6px] whitespace-nowrap leading-[18px]"}>{k}</span>
                </li>
              ))}
            </ul>
          )}
        </li>
      ))}
    </ul>
  );
}

function Undock() {
  return <svg width="12" height="11" fill="none"><path d="M.5.5h6v6h-6z" stroke="#d4d4d4" /><path d="M5.500 4.500h6v6h-6z" fill="#505253" stroke="#d4d4d4" /></svg>;
}

function Browser() {
  return (
    <section className="flex min-h-0 flex-1 flex-col overflow-hidden rounded-[4px] bg-[#484a4a]" aria-label="Browser">
      <div className="flex h-[19px] shrink-0 items-center bg-gradient-to-b from-[#5d5f60] to-[#4e5050]">
        <Btn label="Media" className="h-full w-10 justify-start border-r-2 border-black bg-[#3c3e3f] pl-1"><svg width="14" height="13"><path d="M0 2l1-2h4l1 2h7v11H0z" fill="#6f7375" /><path d="M2 4h12v9H2z" fill="#7f8386" /></svg></Btn>
        <Btn label="PlugIns" className="h-full w-[82px] gap-1 border-r-2 border-black text-[11px] font-semibold text-[#c4ccd2] font-['Noto_Sans',sans-serif]">
          <svg width="15" height="14" fill="none"><path d="M1 13 3 8l6-6 2 2-6 6z" fill="#8b8f91" stroke="#a4a8aa" /><path d="M8 12c3 0 2-5 4-6s3-2 1-5" stroke="#a4a8aa" /></svg>
          PlugIns<svg className="ml-[5px]" width="7" height="6"><path d="M0 0h7L3.500 6z" fill="#707476" /></svg>
        </Btn>
        <Btn label="Notes" className="h-full w-[40px] justify-start border-r border-black bg-[#3c3e3f] pl-[3px]"><svg width="15" height="13" fill="none"><path d="M0 0h11v13H0z" fill="#6f7375" /><path d="M2 3h6M2 6h5M2 9h4" stroke="#3c3e3f" /><path d="M14 1 7 10" stroke="#8b8f91" strokeWidth="2" /></svg></Btn>
        <div className="flex flex-1 items-center justify-end gap-[6px] pr-2"><Undock /><svg width="7" height="6"><path d="M0 0h7L3.500 6z" fill="#dcdcdc" /></svg><svg width="10" height="7"><path d="M0 0l5 3.500L0 7zM5 0l5 3.500L5 7z" fill="#dcdcdc" /></svg></div>
      </div>
      <div className="mt-[5px] flex shrink-0 gap-[5px] pl-[6px] font-['Liberation_Sans']">
        <Btn label="Audio FX" className="h-5 w-[26px] rounded-[1px] bg-[#2e3131]"><span className="bg-[#dcdcdc] px-px text-[9px] leading-[13px] text-[#222]">FX</span></Btn>
        <Btn label="MIDI FX" className="h-5 w-[26px] rounded-[1px] bg-[#2e3131] text-[7px] font-bold text-[#dcdcdc]"><svg className="absolute left-[6px] top-[2px]" width="10" height="10"><circle cx="5" cy="5" r="4.500" fill="#dcdcdc" /><circle cx="3" cy="4" r="1" fill="#333" /><circle cx="7" cy="4" r="1" fill="#333" /><circle cx="5" cy="7" r="1" fill="#333" /></svg><span className="absolute bottom-[2px] right-[3px] leading-[8px]">FX</span></Btn>
        <Btn label="Instruments" className="h-5 w-[72px] rounded-[1px] bg-[#cd8743] text-[11px] text-[#1f1a10]">Instruments</Btn>
        <Btn label="Rewire" className="h-5 w-[26px] rounded-[1px] bg-[#2e3131]"><svg width="14" height="12" fill="none"><path d="M0 1.500h3l8 9h3M0 10.500h3l8-9h3M0 6h3l3 3M14 6h-3L8 3" stroke="#dcdcdc" strokeWidth="1.800" /></svg></Btn>
      </div>
      <div className="mt-[5px] flex shrink-0 gap-1 pl-[5px] pr-[3px]">
        <div className="relative flex h-[22px] flex-1 items-center rounded-[3px] bg-[#2e2f2f]">
          <input type="search" aria-label="Search plug-ins" className="h-full w-full bg-transparent px-2 text-[12px] text-white outline-none" />
          <svg className="absolute right-[5px]" width="13" height="13" fill="none"><circle cx="5" cy="5" r="3.800" stroke="#8b8d8e" strokeWidth="1.800" /><path d="M8 8l4 4" stroke="#8b8d8e" strokeWidth="2.400" /></svg>
        </div>
        <Btn label="Clear search" className="h-[22px] w-[26px] rounded-[1px] bg-[#333535]"><svg width="10" height="10"><path d="M1 1l8 8M9 1 1 9" stroke="#e8302e" strokeWidth="3" /></svg></Btn>
      </div>
      <div className="mx-[6px] mt-[7px] flex min-h-0 flex-1 border-4 border-b-2 border-[#1f2021] bg-[#2f2f2f]">
        <Tree />
        <div className="flex w-[17px] shrink-0 justify-center bg-[#f0f0f0] pt-[17px]"><span className="h-[258px] w-[2px] bg-[#858585]" /></div>
      </div>
      <p className="h-[21px] shrink-0 pl-[5px] pt-1 text-[11px] leading-4 text-[#b6b8ba] font-['Noto_Sans',sans-serif]">68 Plug-ins</p>
    </section>
  );
}

function Help() {
  return (
    <section className="flex h-[245px] shrink-0 flex-col rounded-[4px] bg-[#484a4a] font-['Liberation_Sans']" aria-label="Help">
      <div className="flex h-6 shrink-0 items-center gap-[6px] rounded-t-[4px] bg-gradient-to-b from-[#626466] to-[#4b4c4d] pl-[9px] pr-[9px]">
        <h2 className="flex-1 pt-1 font-['Noto_Sans',sans-serif] text-[12px] font-bold text-[#aeb4ba]">МОДУЛЬ СПРАВКИ</h2>
        <Undock /><svg width="7" height="6"><path d="M0 0h7L3.500 6z" fill="#dcdcdc" /></svg><svg width="8" height="10"><path d="M0 0h8v1L4 4.500 0 1zM0 5h8v1L4 9.500 0 6z" fill="#dcdcdc" /></svg>
      </div>
      <div className="mx-[5px] mb-[5px] flex min-h-0 flex-1 border-[3px] border-[#252626] bg-[#2f2f2f]">
        <div className="min-w-0 flex-1 overflow-hidden pl-[5px] pr-1 text-[12px] leading-[14px] text-[#b4b4b4]">
          <h3 className="mt-1 text-[15px] font-bold leading-[17px] text-[#c4c4c4]">Clips Pane</h3>
          <p className="mt-[10px]">The Clips pane shows the clips in the project on a timeline that helps you visualize how the project is organized. Clips contain markings that indicate their contents.</p>
          <p className="mt-1">The Clips pane lets you select, move, and copy clips from place to place to change the arrangement of music and sound in your<br />project.</p>
          <a href="#learn" className="ml-[2px] mt-4 inline-block rounded-[3px] border border-[#6b6b6b] px-2 py-1 text-[#c4c4c4]">Learn More</a>
        </div>
        <div className="flex w-[17px] shrink-0 flex-col justify-between bg-[#373737]">
          <Btn label="Scroll up" className="h-[33px] bg-[#484a4a] pt-[10px]"><svg width="12" height="9" fill="none"><path d="M1 8l5-6 5 6" stroke="#111" strokeWidth="2.500" /></svg></Btn>
          <Btn label="Scroll down" className="h-[50px] bg-[#484a4a] pt-1"><svg width="12" height="9" fill="none"><path d="M1 1l5 6 5-6" stroke="#111" strokeWidth="2.500" /></svg></Btn>
        </div>
      </div>
    </section>
  );
}

function Dock() {
  return (
    <footer className="flex h-[25px] shrink-0 overflow-hidden rounded-[4px] bg-[#484a4a]">
      <div className="flex w-[86px] items-center justify-between bg-gradient-to-b from-[#484a4a] to-[#606264] pl-[11px] pr-1 pt-[3px]">
        <span className="font-['Noto_Sans',sans-serif] text-[12px] font-semibold text-[#b6bcc2]">Консоль</span>
        <Btn label="Close console tab"><svg width="9" height="9"><path d="M1 1l7 7M8 1 1 8" stroke="#a8acae" strokeWidth="2" /></svg></Btn>
      </div>
      <div className="mt-[5px] flex flex-1 items-center justify-end border-l-2 border-t border-[#2a2b2c] pr-[14px] shadow-[inset_0_1px_0_#68696a]">
        <Btn label="Expand dock"><svg width="8" height="9"><path d="M4 0l4 4H0zM4 5l4 4H0z" fill="#e4e4e4" /></svg></Btn>
      </div>
    </footer>
  );
}

/* ---------- taskbar ---------- */

function Taskbar() {
  const cell = "flex w-11 items-center justify-center";
  return (
    <footer className="flex h-12 shrink-0 items-center justify-between border-t border-[#3b414d] bg-[linear-gradient(90deg,#1d202c_0%,#1b2433_20%,#12205c_25%,#121f5c_34%,#162448_40%,#11205c_46%,#1a1c33_53%,#142354_57%,#11205c_62%,#1b1c2e_68%,#1b2130_76%,#1a2334_100%)] text-white font-['Noto_Sans',sans-serif]">
      <div className="w-[447px] min-w-0 shrink" />
      <div className="flex shrink-0 items-center">
        <a href="#start" aria-label="Start" className={cell}><svg width="24" height="24"><defs><linearGradient id="win" x1="0" y1="0" x2="1" y2="1"><stop offset="0" stopColor="#8fe0ff" /><stop offset="1" stopColor="#0f9af5" /></linearGradient></defs><path d="M0 0h11.400v11.400H0zM12.600 0H24v11.400H12.600zM0 12.600h11.400V24H0zM12.600 12.600H24V24H12.600z" fill="url(#win)" /></svg></a>
        <button type="button" className="mx-1 flex h-8 w-[99px] items-center justify-center gap-2 rounded-full bg-[#25316a]/70 text-[12px]"><Search size={14} strokeWidth={2.4} />Поиск</button>
        <a href="#yandex" aria-label="Browser" className={cell}><svg width="24" height="24"><circle cx="12" cy="12" r="12" fill="#fff" /><path d="M6.500 5.500 12 13M17.500 5.500 12 13v7" stroke="#f5323c" strokeWidth="3" fill="none" /></svg></a>
        <a href="#files" aria-label="Explorer" className={cell}><svg width="26" height="24"><path d="M1 3q0-2 2-2h6l3 3v4H1z" fill="#d99a12" /><path d="M1 6h8l2-2h12q2 0 2 2v15q0 2-2 2H3q-2 0-2-2z" fill="#ffcf48" /><path d="M5 23v-4q0-2 2-2h12q2 0 2 2v4z" fill="#0f76c4" /><path d="M9 20h8" stroke="#0a5a9c" strokeWidth="1.500" /></svg></a>
        <a href="#edge" aria-label="Edge" className={cell}><svg width="24" height="24"><defs><linearGradient id="edge" x1="0" y1="0" x2="1" y2="0.300"><stop offset="0" stopColor="#2aa7e8" /><stop offset="1" stopColor="#62e36a" /></linearGradient></defs><path d="M0 12A12 12 0 0 1 24 11c0 4-3 6-6 6-2 0-4-1-3-3 1-3-2-5-5-5C5 9 1 11 0 12z" fill="url(#edge)" /><path d="M0 12c1-4 6-6 10-5 4 .5 6 4 5 7-3-3-8 1-6 5 1 3 4 5 7 4.500A12 12 0 0 1 0 12z" fill="#1676c9" /><path d="M9 13c-2 5 2 9 6 8 3 0 6-2 7.500-4.500-4 2-11 1-13.500-3.500z" fill="#0d4e9c" /></svg></a>
        <a href="#store" aria-label="Store" className={cell}><svg width="24" height="24"><path d="M7 6V1.500h10V6" stroke="#26b0f5" strokeWidth="2" fill="none" /><path d="M1 5h22v16q0 3-3 3H4q-3 0-3-3z" fill="#f4f6f8" /><path d="M7.500 9.500h4v4h-4z" fill="#f25022" /><path d="M12.500 9.500h4v4h-4z" fill="#7fba00" /><path d="M7.500 14.500h4v4h-4z" fill="#00a4ef" /><path d="M12.500 14.500h4v4h-4z" fill="#ffb900" /></svg></a>
        <a href="#qb" aria-label="Torrents" className={cell}><span className="flex h-6 w-6 items-center justify-center rounded-full border border-[#a9cdf5] bg-[#3f7fd0] pb-[2px] text-[14px] leading-none text-[#dcebfc]">qb</span></a>
        <a href="#tg" aria-label="Telegram" className={cell}><svg width="22" height="22"><circle cx="11" cy="11" r="10.500" fill="#279fd8" /><path d="M3.500 11 17 5.500 15 16.500l-4.500-3-2 2L8 12z" fill="#fff" /></svg></a>
        <a href="#viber" aria-label="Viber" className={cell}><svg width="24" height="26"><path d="M6 1h12q5 1 5 6v7q0 5-5 6h-6l-4 5v-5q-7 0-7-7V7q0-5 5-6z" fill="#7c62ea" stroke="#efecfd" strokeWidth="1.800" /><path d="M7 6c-3 2 2 10 8 11 2 0 3-3 1-4-2-1-2 1-3 0-2-1-4-4-3-4s1-1 0-2-2-2-3-1z" fill="#fff" /><path d="M12 5c4 0 6 3 6 6M12.500 7.500c2 0 3 1.500 3 3" stroke="#fff" strokeWidth="1.200" fill="none" /></svg></a>
        <a href="#search" aria-label="Search tool" className={cell}><svg width="24" height="24"><circle cx="14" cy="9" r="7" stroke="#ff7f12" strokeWidth="4" fill="none" /><path d="M9 14 3 21" stroke="#ff7f12" strokeWidth="5" strokeLinecap="round" /></svg></a>
        <a href="#cakewalk" aria-label="Cakewalk" className={cell}><span className="relative flex h-10 w-10 items-center justify-center rounded-[4px] bg-white/10"><Logo size={24} /><span className="absolute bottom-px h-[3px] w-4 rounded-full bg-[#4cc2f5]" /></span></a>
      </div>
      <div className="flex w-[446px] items-center justify-end pr-5 text-[11px]">
        <ChevronUp size={18} />
        <span className="ml-[17px] text-[12px]">ENG</span>
        <svg className="ml-[16px]" width="17" height="17" fill="none"><path d="M11 2.500H1v11h13V7M5 16h6M8 13.500V16M12.500.5h3.500v4h-3.500zM14.200 5v6" stroke="#fff" strokeWidth="1.200" /></svg>
        <Volume2 className="ml-[7px]" size={18} strokeWidth={1.600} />
        <div className="ml-[14px] flex flex-col items-end leading-4"><span>19:01</span><span>14.01.2024</span></div>
        <svg className="ml-[9px]" width="15" height="16"><path d="M2 12V7q0-5 5-5.500h2V6h5v6l1 1.500H0zM5 14h5q-2.500 3-5 0z" fill="#fff" /><path d="M11 .8h3.500L11 4.500h4" stroke="#fff" fill="none" /><path d="M5 6h4l-4 4.500h4" stroke="#1b2130" strokeWidth="1.300" fill="none" /></svg>
      </div>
    </footer>
  );
}

export default function App() {
  return (
    <div className="flex h-screen flex-col overflow-hidden bg-[#262728] font-['Liberation_Sans',Arial,sans-serif]">
      <TitleBar />
      <MenuBar />
      <ControlBar />
      <div className="flex min-h-0 flex-1 gap-[5px] pb-[5px] pl-[3px] pr-[3px]">
        <Inspector />
        <div className="flex min-w-0 flex-1 flex-col gap-[5px]">
          <div className="flex min-h-0 flex-1 gap-[5px]">
            <TrackView />
            <div className="flex w-[229px] shrink-0 flex-col gap-[5px]">
              <Browser />
              <Help />
            </div>
          </div>
          <Dock />
        </div>
      </div>
      <Taskbar />
    </div>
  );
}
